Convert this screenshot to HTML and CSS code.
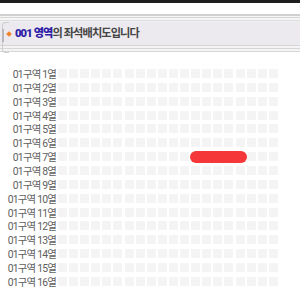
FILE: index.html
```html
<!DOCTYPE html>
<html lang="ko">
<head>
    <meta charset="UTF-8">
    <title>좌석배치도</title>
    <link rel="stylesheet" href="styles.css">
</head>
<body>

<div class="topbar"></div>

<div class="title">
    <span class="mark"></span><b class="zone">001 영역</b>의 좌석배치도입니다
</div>

<div class="seatmap" id="seatmap"></div>

<script>
// 16열 x 20석, 7열에 선택 표시
const map = document.getElementById('seatmap');
for (let r = 1; r <= 16; r++) {
    const row = document.createElement('div');
    row.className = 'row';
    let html = '<span class="label">01구역 ' + r + '열</span><span class="seats">';
    for (let s = 0; s < 20; s++) {
        html += '<i class="seat"></i>';
    }
    html += '</span>';
    if (r === 7) html += '<span class="picked"></span>';
    row.innerHTML = html;
    map.appendChild(row);
}
</script>

</body>
</html>
```

FILE: styles.css
```css
body {
    margin: 0;
    background: #fff;
    font-family: Roboto, "Noto Sans CJK KR", sans-serif;
}
.topbar {
    height: 3px;
    background: #1e1e1e;
}
.title {
    position: relative;
    margin-top: 11px;
    padding: 8px 0 8px 14px;
    height: 23px;
    line-height: 23px;
    font-size: 11.2px;
    font-weight: bold;
    letter-spacing: -0.9px;
    color: #454545;
    background: linear-gradient(to bottom,
        #d0d0d0 0, #d0d0d0 1.5px,
        #f6f6f6 1.5px, #f6f6f6 3px,
        #d6d6d6 3px, #d6d6d6 4.5px,
        #f6f6f6 4.5px, #f6f6f6 6px,
        #dcdcdc 6px, #dcdcdc 7px,
        #f1f0f2 7px, #f1f0f2 8px,
        #eceaee 8px, #eceaee 31px,
        #d6d6d6 31px, #d6d6d6 32px,
        #f4f4f4 32px, #f4f4f4 34px,
        #d6d6d6 34px, #d6d6d6 35px,
        #f4f4f4 35px, #f4f4f4 37px,
        #d6d6d6 37px, #d6d6d6 38.5px,
        #fff 38.5px);
}
.title::before {
    content: "";
    position: absolute;
    left: 2px;
    top: 8px;
    width: 6px;
    height: 29px;
    border: 1px solid #cdcdcd;
    border-right: none;
    border-radius: 4px 0 0 4px;
}
.title::after {
    content: "";
    position: absolute;
    left: 2px;
    top: 15px;
    height: 13px;
    border-left: 2px solid #b8b8c0;
}
.mark {
    display: inline-block;
    width: 4px;
    height: 4px;
    margin: 0 4px 1px -7px;
    background: #f0822a;
    transform: rotate(45deg);
    vertical-align: middle;
}
.zone {
    color: #2c20a6;
}
.seatmap {
    margin-top: 13.5px;
}
.row {
    position: relative;
    display: flex;
    align-items: center;
    height: 13.87px;
}
.label {
    width: 57px;
    padding-right: 1px;
    box-sizing: border-box;
    text-align: right;
    font-size: 10.4px;
    letter-spacing: -0.8px;
    color: #606060;
    white-space: nowrap;
}
.seats {
    display: flex;
    gap: 2.1px;
    margin-left: 1px;
}
.seat {
    display: block;
    width: 9px;
    height: 9px;
    background: #f4f4f4;
    border-radius: 1px;
}
.picked {
    position: absolute;
    left: 190px;
    top: 1px;
    width: 57px;
    height: 12px;
    border-radius: 6px;
    background: #f5373a;
}
```
